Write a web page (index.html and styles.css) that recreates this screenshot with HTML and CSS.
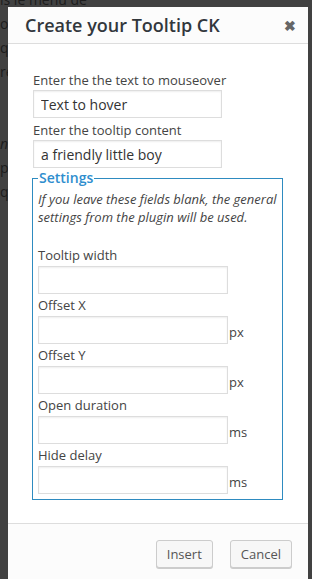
FILE: index.html
```html
<!DOCTYPE html>
<html lang="en">
<head>
  <meta charset="UTF-8" />
  <title>Create your Tooltip CK</title>
  <link rel="stylesheet" href="styles.css">
</head>
<body>
  <div class="behind">
    <p class="first">is le menu de</p>
    <p>o.</p>
    <p>qu</p>
    <p>re</p>
    <p class="gap"><em>n</em></p>
    <p>pe</p>
    <p>qu</p>
  </div>

  <div class="modal">
    <div class="modal-head">
      <h1>Create your Tooltip CK</h1>
      <span class="close">&#10006;</span>
    </div>

    <div class="modal-body">
      <label>Enter the the text to mouseover</label>
      <input type="text" class="field" value="Text to hover">
      <label>Enter the tooltip content</label>
      <input type="text" class="field" value="a friendly little boy">

      <fieldset>
        <legend>Settings</legend>
        <p class="note">If you leave these fields blank, the general settings from the plugin will be used.</p>

        <label>Tooltip width</label>
        <div class="row"><input type="text" class="field small"></div>
        <label>Offset X</label>
        <div class="row"><input type="text" class="field small"><span class="unit">px</span></div>
        <label>Offset Y</label>
        <div class="row"><input type="text" class="field small"><span class="unit">px</span></div>
        <label>Open duration</label>
        <div class="row"><input type="text" class="field small"><span class="unit">ms</span></div>
        <label>Hide delay</label>
        <div class="row"><input type="text" class="field small"><span class="unit">ms</span></div>
      </fieldset>
    </div>

    <div class="modal-foot">
      <button>Insert</button>
      <button>Cancel</button>
    </div>
  </div>
</body>
</html>
```

FILE: styles.css
```css
body {
  margin: 0;
  height: 579px;
  overflow: hidden;
  background-color: #414141;
  font-family: 'Open Sans', sans-serif;
  color: #444;
  position: relative;
}

.behind {
  color: #1c1c1c;
  font-size: 14px;
  line-height: 24px;
  margin-top: -12px;
}

.behind p {
  margin: 0;
}

.behind .gap {
  margin-top: 48px;
}

.modal {
  position: absolute;
  left: 8px;
  top: 7px;
  width: 300px;
  height: 600px;
  background: #fcfcfc;
  display: flex;
  flex-direction: column;
}

.modal-head {
  height: 36px;
  border-bottom: 1px solid #ddd;
  display: flex;
  align-items: center;
  justify-content: space-between;
  padding: 0 12px 0 17px;
}

.modal-head h1 {
  margin: 0;
  font-size: 18px;
  font-weight: 600;
  color: #32373c;
}

.close {
  color: #666;
  font-size: 14px;
  font-weight: bold;
}

.modal-body {
  background: #fff;
  padding: 27px 24px 23px 25px;
  display: flex;
  flex-direction: column;
  align-items: flex-start;
}

label {
  font-size: 13px;
  line-height: 18px;
  color: #444;
}

.field {
  box-sizing: border-box;
  width: 189px;
  height: 28px;
  margin: 1px 0 3px;
  border: 1px solid #ddd;
  box-shadow: inset 0 1px 2px rgba(0, 0, 0, 0.07);
  padding: 0 7px;
  font-family: 'Open Sans', sans-serif;
  font-size: 14px;
  color: #333;
  background: #fff;
}

.modal-body > .field:last-of-type {
  margin-bottom: 0;
}

.field.small {
  width: 190px;
  height: 28px;
  margin: 0;
}

fieldset {
  box-sizing: border-box;
  width: 251px;
  margin: 3px 0 0 -1px;
  padding: 0 0 5px 5px;
  border: 1px solid #2e8bc0;
  display: flex;
  flex-direction: column;
  align-items: flex-start;
}

legend {
  color: #2e8ece;
  font-size: 14px;
  font-weight: 600;
  padding: 0 1px;
  line-height: 14px;
}

.note {
  margin: 5px 0 18px;
  font-size: 13px;
  font-style: italic;
  line-height: 18px;
  color: #444;
}

fieldset label {
  margin-top: 2px;
  line-height: 18px;
}

.row {
  display: flex;
  align-items: center;
  margin-top: 2px;
}

.unit {
  font-size: 13px;
  line-height: 18px;
  margin-left: 1px;
  padding-top: 3px;
  color: #444;
}

.modal-foot {
  border-top: 1px solid #ddd;
  background: #fcfcfc;
  display: flex;
  justify-content: flex-end;
  gap: 17px;
  padding: 16px 16px 0;
}

button {
  height: 28px;
  padding: 0 10px;
  border: 1px solid #ccc;
  border-radius: 3px;
  background: #f7f7f7;
  box-shadow: 0 1px 0 #ccc;
  font-family: 'Open Sans', sans-serif;
  font-size: 13px;
  color: #555;
}
```
